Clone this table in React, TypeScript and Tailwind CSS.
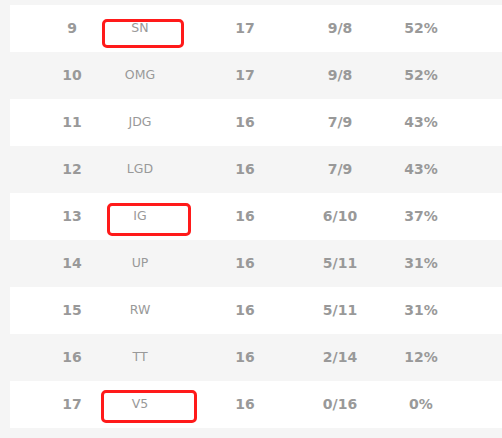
import React from 'react';

interface Team {
  rank: number;
  name: string;
  games: number;
  record: string;
  rate: string;
  marked?: string;
}

const teams: Team[] = [
  { rank: 9, name: 'SN', games: 17, record: '9/8', rate: '52%', marked: 'left-[92px] top-[14px] w-[82px] h-[29px]' },
  { rank: 10, name: 'OMG', games: 17, record: '9/8', rate: '52%' },
  { rank: 11, name: 'JDG', games: 16, record: '7/9', rate: '43%' },
  { rank: 12, name: 'LGD', games: 16, record: '7/9', rate: '43%' },
  { rank: 13, name: 'IG', games: 16, record: '6/10', rate: '37%', marked: 'left-[97px] top-[10px] w-[84px] h-[33px]' },
  { rank: 14, name: 'UP', games: 16, record: '5/11', rate: '31%' },
  { rank: 15, name: 'RW', games: 16, record: '5/11', rate: '31%' },
  { rank: 16, name: 'TT', games: 16, record: '2/14', rate: '12%' },
  { rank: 17, name: 'V5', games: 16, record: '0/16', rate: '0%', marked: 'left-[91px] top-[9px] w-[96px] h-[33px]' },
];

const numStyle = 'text-center text-[14px] font-bold text-[#999]';

const App: React.FC = () => {
  return (
    <div className="w-[502px] h-[438px] bg-[#f5f5f5] pt-[5px] pl-[10px] font-['DejaVu_Sans',Verdana,sans-serif] overflow-hidden">
      {teams.map((team, i) => (
        <div
          key={team.rank}
          className={`relative grid grid-cols-[64px_72px_138px_52px_110px] items-center h-[47px] pl-[30px] ${
            i % 2 === 0 ? 'bg-white' : 'bg-[#f5f5f5]'
          }`}
        >
          <div className={numStyle}>{team.rank}</div>
          <div className="text-center text-[12.5px] text-[#999]">{team.name}</div>
          <div className={numStyle}>{team.games}</div>
          <div className={numStyle}>{team.record}</div>
          <div className={numStyle}>{team.rate}</div>
          {team.marked && (
            // 红框标注
            <div className={`absolute border-[3px] border-[#ff1a1a] rounded-[5px] ${team.marked}`} />
          )}
        </div>
      ))}
    </div>
  );
};

export default App;
